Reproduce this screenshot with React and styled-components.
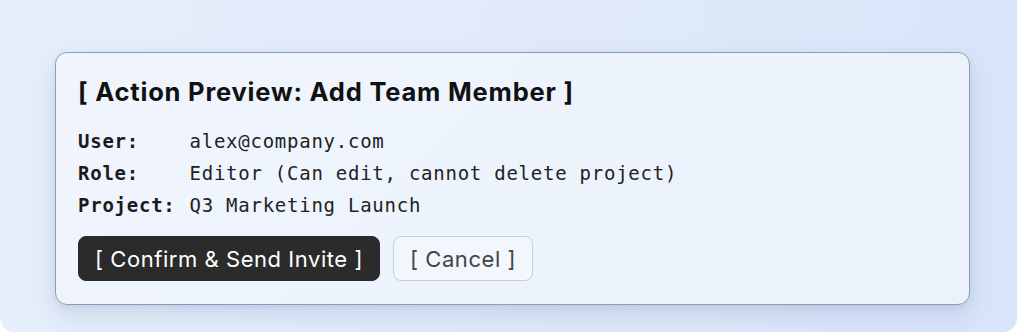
import styled, { createGlobalStyle } from "styled-components";

const GlobalStyle = createGlobalStyle`
  html, body {
    margin: 0;
    padding: 0;
    background: #ffffff;
  }
  * {
    box-sizing: border-box;
  }
`;

const Backdrop = styled.div`
  width: 1017px;
  height: 332px;
  border-radius: 0 0 14px 14px;
  background: linear-gradient(100deg, #e6effb 0%, #e0eafa 50%, #d8e4f9 100%);
  padding: 52px 0 0 55px;
`;

const Card = styled.section`
  width: 915px;
  height: 253px;
  border: 1.5px solid #8a9cb8;
  border-radius: 12px;
  background: linear-gradient(135deg, #f0f5fd 0%, #ebf2fc 100%);
  box-shadow: 0 10px 24px rgba(70, 95, 140, 0.16), 0 2px 6px rgba(70, 95, 140, 0.08);
  padding: 22px 22px;
  display: flex;
  flex-direction: column;
`;

const Title = styled.h2`
  margin: 0 0 16px;
  font-family: Inter, "Noto Sans", sans-serif;
  font-weight: 700;
  font-size: 25.5px;
  line-height: 34px;
  color: #111111;
  letter-spacing: 0.8px;
`;

const Details = styled.dl`
  margin: 0;
  display: grid;
  grid-template-columns: auto 1fr;
  column-gap: 14px;
  font-family: "DejaVu Sans Mono", "Liberation Mono", monospace;
  font-size: 19px;
  letter-spacing: 0.75px;
  line-height: 32px;
`;

const Label = styled.dt`
  font-weight: 700;
  color: #1b1b1b;
`;

const Value = styled.dd`
  margin: 0;
  color: #222222;
`;

const Actions = styled.div`
  display: flex;
  gap: 13px;
  margin-top: 15px;
`;

const Button = styled.button`
  height: 45px;
  padding: 0 16px;
  border-radius: 8px;
  font-family: Inter, "Noto Sans", sans-serif;
  font-size: 22px;
  letter-spacing: 0.55px;
  font-weight: 400;
  cursor: pointer;
  border: 1px solid ${(p) => (p.$primary ? "#2b2b2b" : "#c4cedc")};
  background: ${(p) => (p.$primary ? "#2b2b2b" : "#f2f6fd")};
  color: ${(p) => (p.$primary ? "#ffffff" : "#444444")};
`;

const rows = [
  ["User:", "alex@company.com"],
  ["Role:", "Editor (Can edit, cannot delete project)"],
  ["Project:", "Q3 Marketing Launch"],
];

export default function App() {
  return (
    <>
      <GlobalStyle />
      <Backdrop>
        <Card>
          <Title>[ Action Preview: Add Team Member ]</Title>
          <Details>
            {rows.map(([label, value]) => [
              <Label key={label}>{label}</Label>,
              <Value key={label + "v"}>{value}</Value>,
            ])}
          </Details>
          <Actions>
            <Button $primary>[ Confirm &amp; Send Invite ]</Button>
            <Button>[ Cancel ]</Button>
          </Actions>
        </Card>
      </Backdrop>
    </>
  );
}
